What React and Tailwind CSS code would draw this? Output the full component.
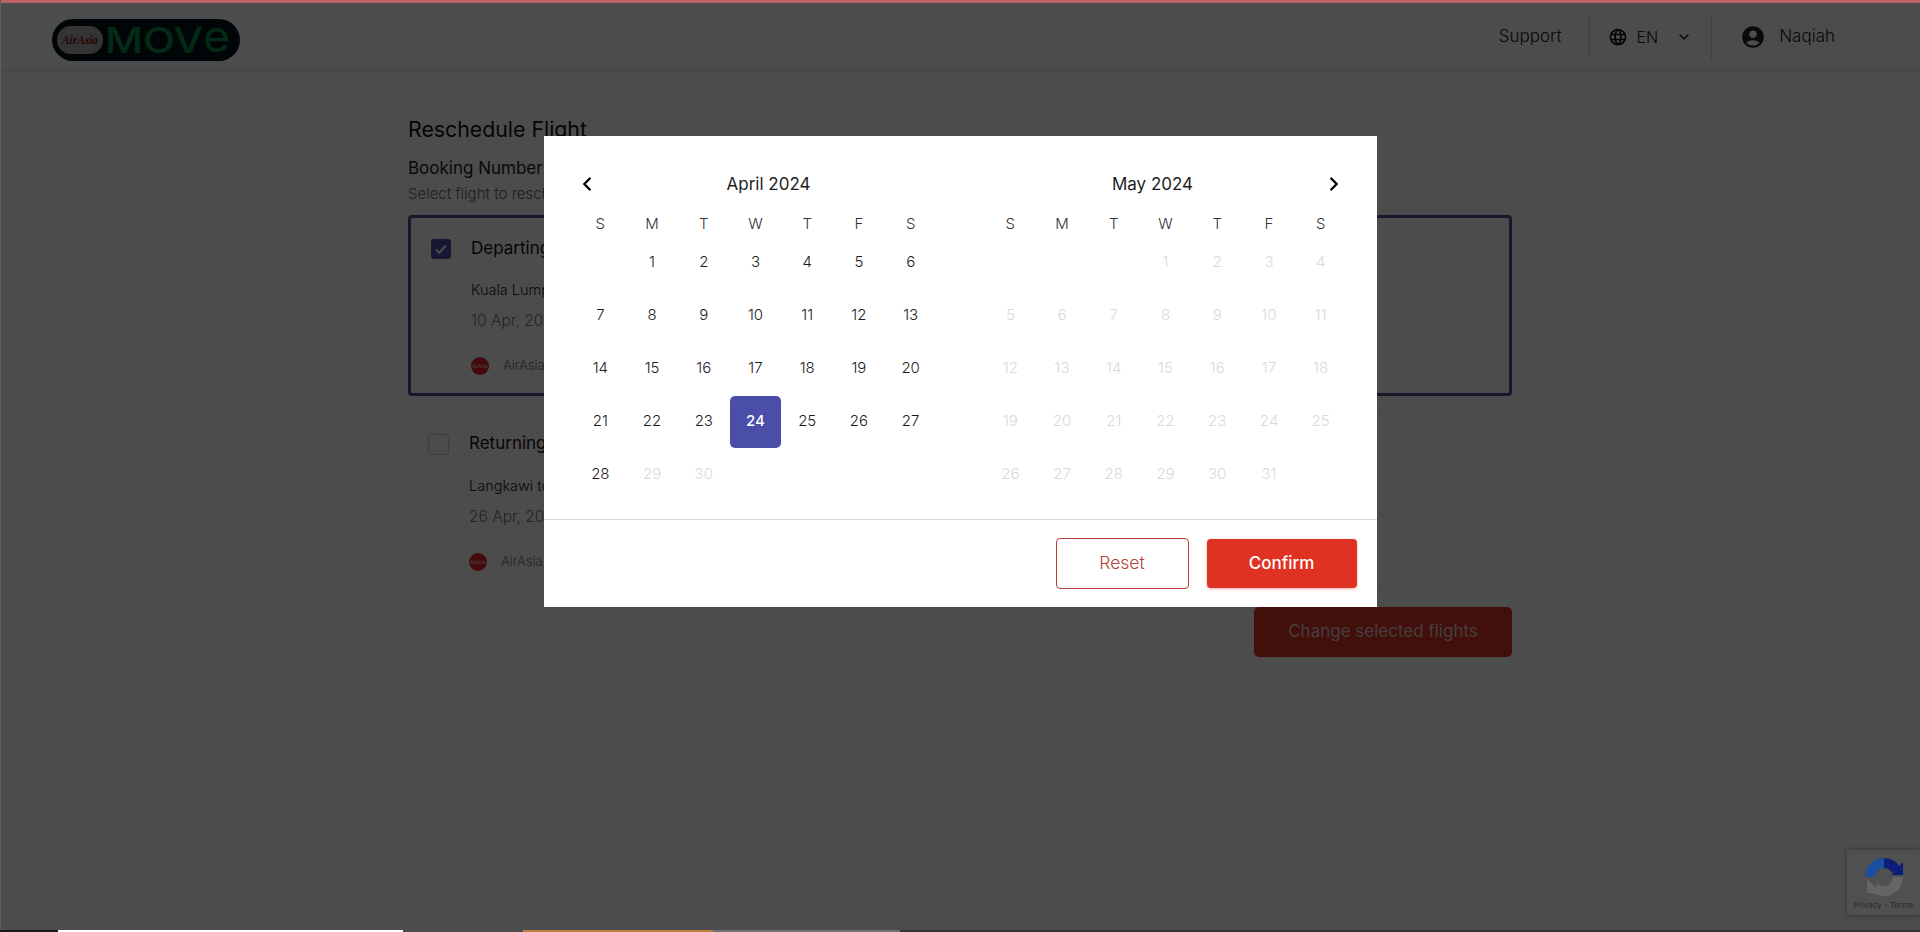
import React from "react";
import { ChevronLeft, ChevronRight, ChevronDown } from "lucide-react";
import { MdLanguage, MdAccountCircle } from "react-icons/md";

const FONT = "[font-family:Inter,'Noto_Sans',sans-serif]";
const WEEK = ["S", "M", "T", "W", "T", "F", "S"];

function AirLogo() {
  return (
    <span className="flex h-[18px] w-[18px] items-center justify-center rounded-full bg-[#e3262a]">
      <span className="text-[5px] italic leading-none text-white">AirAsia</span>
    </span>
  );
}

function Month({ title, side, blanks, count, activeUntil, selected }) {
  const cells = [];
  for (let i = 0; i < blanks; i++) cells.push(<div key={"b" + i} className="h-[53px]" />);
  for (let d = 1; d <= count; d++) {
    const active = d <= activeUntil;
    cells.push(
      <div key={d} className="flex h-[53px] items-center justify-center">
        {d === selected ? (
          <span className="flex h-[52px] w-full items-center justify-center rounded-[5px] bg-[#4b4ea8] text-[15px] font-medium text-white">
            {d}
          </span>
        ) : (
          <span className={active ? "text-[15px] font-light text-[#1c1c1c]" : "text-[15px] font-light text-[#d9d9dc]"}>{d}</span>
        )}
      </div>
    );
  }
  return (
    <div className="w-[362px]">
      <div className="flex h-6 items-center">
        {side === "left" && (
          <span className="flex w-[26px] items-center justify-start">
            <ChevronLeft size={22} strokeWidth={2.6} className="-mt-[2px] ml-[1px] text-black" />
          </span>
        )}
        <span className="flex-1 text-center text-[17px] text-[#1e1e1e]">{title}</span>
        {side === "right" && (
          <span className="flex w-[26px] items-center justify-end">
            <ChevronRight size={22} strokeWidth={2.6} className="-mt-[2px] mr-[2px] text-black" />
          </span>
        )}
      </div>
      <div className="mt-[17px] grid grid-cols-7">
        {WEEK.map((w, i) => (
          <div key={i} className="flex h-5 items-center justify-center text-[15px] font-light text-[#333]">
            {w}
          </div>
        ))}
      </div>
      <div className="mt-[2px] grid grid-cols-7">{cells}</div>
    </div>
  );
}

function Recaptcha() {
  return (
    <div className="absolute bottom-[17px] right-0 z-20 flex h-[65px] w-[73px] flex-col items-center bg-[#505050] shadow-[0_0_5px_rgba(0,0,0,0.35)]">
      <svg width="40" height="40" viewBox="0 0 40 40" className="mt-[7px]" fill="none">
        <path d="M6 20a14 14 0 0 1 14-14" stroke="#1c4fa0" strokeWidth="10" />
        <path d="M20 6a14 14 0 0 1 12 7" stroke="#0c1d7a" strokeWidth="10" />
        <path d="M27 18h12V5z" fill="#0c1d7a" />
        <path d="M34 20a14 14 0 0 1-14 14a14 14 0 0 1-9-3" stroke="#656565" strokeWidth="10" />
        <path d="M3 22l14 14H3z" fill="#656565" />
      </svg>
      <span className="mt-[4px] whitespace-nowrap text-[8px] leading-none text-[#2a2a2a]">Privacy - Terms</span>
    </div>
  );
}

function Logo() {
  return (
    <svg width="188" height="42" viewBox="0 0 188 42" className="mt-[10px] block">
      <rect x="0" y="0" width="188" height="42" rx="21" fill="#01171b" />
      <rect x="5" y="7" width="46" height="28" rx="14" fill="#adadad" />
      <text x="28" y="25" textAnchor="middle" fontSize="13" fontStyle="italic" fontWeight="700" fill="#8f1018" fontFamily="Liberation Serif, serif" textLength="36" lengthAdjust="spacingAndGlyphs">AirAsia</text>
      <text x="53" y="34" fontSize="36" fill="#0a8c45" fontFamily="Inter, sans-serif" fontWeight="500" textLength="98" lengthAdjust="spacingAndGlyphs">MOV</text>
      <text x="151" y="33" fontSize="44" fill="#0a8c45" fontFamily="Inter, sans-serif" fontWeight="400" textLength="27" lengthAdjust="spacingAndGlyphs">e</text>
    </svg>
  );
}

export default function App() {
  return (
    <div className={"relative flex h-screen flex-col overflow-hidden bg-[#ffffff] " + FONT}>
      <div className="absolute left-0 right-0 top-0 z-20 h-[3px] bg-[#bd6262]" />
      <div className="absolute bottom-0 left-0 top-0 z-20 w-[1px] bg-[#5e5e5e]" />
      <header className="flex h-[71px] shrink-0 items-center justify-between border-b border-[#e5e5e5] bg-white pl-[52px] pr-[85px] shadow-[0_1px_4px_rgba(0,0,0,0.08)]">
        <Logo />
        <nav className="mt-[4px] flex h-[46px] items-center text-[#222]">
          <span className="mr-[27px] text-[17px] font-light text-[#222]">Support</span>
          <div className="flex h-full items-center border-l border-[#d8d8d8] pl-5 pr-[19px]">
            <MdLanguage size={20} className="-mx-[1.5px] text-[#111]" />
            <span className="ml-[10px] text-[16px] font-light">EN</span>
            <ChevronDown size={16} strokeWidth={2} className="ml-[18px] text-[#111]" />
          </div>
          <div className="flex h-full items-center border-l border-[#d8d8d8] pl-[28px]">
            <MdAccountCircle size={26} className="text-[#222]" />
            <span className="ml-[13px] text-[17px] font-light">Naqiah</span>
          </div>
        </nav>
      </header>

      <main className="mx-auto flex w-[1104px] flex-1 flex-col pt-[44px]">
        <h1 className="text-[21.3px] font-normal leading-7 text-[#111]">Reschedule Flight</h1>
        <p className="mt-[13px] text-[17px] font-normal leading-6 text-[#222]">Booking Number: M7XQ2P</p>
        <p className="mt-[4px] text-[15px] font-light leading-5 text-[#666]">Select flight to reschedule</p>

        <section className="mt-[11px] rounded-[4px] border-[3px] border-[#4a4d90] px-5 pb-[17px] pt-5">
          <div className="flex gap-5">
            <span className="mt-[1px] flex h-5 w-5 items-center justify-center rounded-[3px] bg-[#4b4ea8]">
              <svg width="14" height="14" viewBox="0 0 14 14" fill="none">
                <path d="M2 7.5l3.2 3.2L12 3.5" stroke="#fff" strokeWidth="2" />
              </svg>
            </span>
            <div>
              <div className="text-[17px] leading-5 text-[#111]">Departing flight</div>
              <div className="mt-[22px] text-[14.5px] font-light leading-5 text-[#222]">Kuala Lumpur to Langkawi</div>
              <div className="mt-[11px] text-[15.5px] font-light leading-5 text-[#777]">10 Apr, 2024</div>
              <div className="mt-[25px] flex h-5 items-center gap-[14px] text-[13px] font-light text-[#777]">
                <AirLogo />
                AirAsia
              </div>
            </div>
          </div>
        </section>

        <section className="mt-[17px] rounded-[4px] border border-[#f4f4f4] px-[19px] pb-[16px] pt-[19px] shadow-[0_1px_3px_rgba(0,0,0,0.08)]">
          <div className="flex gap-5">
            <span className="mt-[1px] h-[21px] w-[21px] rounded-[3px] border border-[#d0d0d0]" />
            <div>
              <div className="text-[17px] leading-5 text-[#111]">Returning flight</div>
              <div className="mt-[23px] text-[14.5px] font-light leading-5 text-[#222]">Langkawi to Kuala Lumpur</div>
              <div className="mt-[11px] text-[15.5px] font-light leading-5 text-[#777]">26 Apr, 2024</div>
              <div className="mt-[25px] flex h-5 items-center gap-[14px] text-[13px] font-light text-[#777]">
                <AirLogo />
                AirAsia
              </div>
            </div>
          </div>
        </section>

        <div className="mt-[18px] flex justify-end">
          <button className="h-[50px] w-[258px] rounded-[5px] bg-[#e03222] text-[17px] text-[#e4cfcd]">Change selected flights</button>
        </div>
      </main>

      <div className="relative z-20 flex h-[2px] shrink-0">
        <div className="w-[58px] bg-[#1a1a1a]" />
        <div className="w-[345px] bg-[#ffffff]" />
        <div className="w-[120px] bg-[#4a4f4c]" />
        <div className="w-[190px] bg-[#bd8040]" />
        <div className="w-[187px] bg-[#6f7270]" />
        <div className="flex-1 bg-[#333333]" />
      </div>

      <div className="absolute inset-0 z-10 flex justify-center bg-black/70 pt-[136px]">
        <div className="h-[471px] w-[833px] bg-white">
          <div className="flex h-[384px] gap-[48px] border-b border-[#d9d9dd] pl-[31px] pt-[37px]">
            <Month title="April 2024" side="left" blanks={1} count={30} activeUntil={28} selected={24} />
            <Month title="May 2024" side="right" blanks={3} count={31} activeUntil={0} />
          </div>
          <div className="flex items-center justify-end gap-[18px] pr-5 pt-[18px]">
            <button className="h-[51px] w-[133px] rounded-[4px] border border-[#b8413a] bg-white text-[17.5px] font-light text-[#b5423a]">Reset</button>
            <button className="h-[49px] w-[150px] rounded-[4px] bg-[#e03222] text-[17px] font-medium text-white shadow-[0_1px_3px_rgba(224,50,34,0.4)]">Confirm</button>
          </div>
        </div>
      </div>
      <Recaptcha />
    </div>
  );
}
